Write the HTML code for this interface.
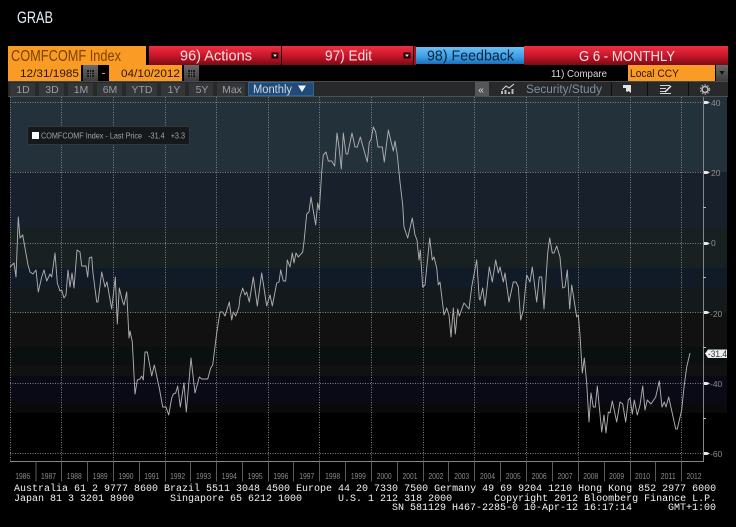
<!DOCTYPE html>
<html><head><meta charset="utf-8"><style>
html,body{margin:0;padding:0;background:#000;width:736px;height:527px;overflow:hidden}
svg{display:block}
text{font-family:"Liberation Sans",sans-serif}
.m{font-family:"Liberation Mono",monospace;font-size:10px;fill:#f2f2f2;white-space:pre}
.y{font-size:8.5px;fill:#8a8a8a;text-anchor:middle}
.a{font-size:8.5px;fill:#8d8d8d}
.b{font-size:10.5px;fill:#999da0;text-anchor:middle}
.g{stroke:#7d8284;stroke-width:1;stroke-dasharray:1 1.5;fill:none}
</style></head><body>
<svg width="736" height="527" viewBox="0 0 736 527" xmlns="http://www.w3.org/2000/svg">
<defs>
<linearGradient id="r" x1="0" y1="0" x2="0" y2="1"><stop offset="0" stop-color="#ee3040"/><stop offset=".5" stop-color="#c8172a"/><stop offset="1" stop-color="#7c0a14"/></linearGradient>
<linearGradient id="bl" x1="0" y1="0" x2="0" y2="1"><stop offset="0" stop-color="#6cc0f5"/><stop offset=".6" stop-color="#3c9ce4"/><stop offset="1" stop-color="#1d6fb4"/></linearGradient>
<linearGradient id="gr" x1="0" y1="0" x2="0" y2="1"><stop offset="0" stop-color="#6a6a6a"/><stop offset="1" stop-color="#3c3c3c"/></linearGradient>
</defs>
<rect width="736" height="527" fill="#000"/>
<text x="17" y="23" font-size="16.500" fill="#e4edf6" textLength="36" lengthAdjust="spacingAndGlyphs">GRAB</text>

<!-- header -->
<rect x="8" y="46" width="138" height="19" fill="#f99b24"/>
<text x="11" y="61" font-size="15.500" fill="#7a4500" textLength="110" lengthAdjust="spacingAndGlyphs">COMFCOMF Index</text>
<rect x="149" y="46" width="132" height="19" fill="url(#r)"/>
<text x="180" y="60.500" font-size="15" fill="#f5e0e2" textLength="72" lengthAdjust="spacingAndGlyphs">96) Actions</text>
<rect x="271.500" y="52.500" width="7" height="6" fill="#1a0205"/><path d="M273 54.500h4l-2 2.500z" fill="#e8e8e8"/>
<rect x="282" y="46" width="131" height="19" fill="url(#r)"/>
<text x="325" y="60.500" font-size="15" fill="#f5e0e2" textLength="47" lengthAdjust="spacingAndGlyphs">97) Edit</text>
<rect x="403.500" y="52.500" width="7" height="6" fill="#1a0205"/><path d="M405 54.500h4l-2 2.500z" fill="#e8e8e8"/>
<rect x="414" y="46" width="2" height="19" fill="#a01522"/>
<rect x="416" y="47" width="108" height="17" fill="url(#bl)"/>
<text x="427" y="60.500" font-size="15" fill="#0b2440" textLength="87" lengthAdjust="spacingAndGlyphs">98)  Feedback</text>
<rect x="524" y="46" width="204" height="19" fill="url(#r)"/>
<text x="579" y="61" font-size="15" fill="#f5e0e2" textLength="96" lengthAdjust="spacingAndGlyphs">G 6 - MONTHLY</text>

<!-- date row -->
<rect x="8" y="65" width="73" height="16" fill="#f99b24"/>
<text x="20" y="77" font-size="11" fill="#2a1800" textLength="59" lengthAdjust="spacingAndGlyphs">12/31/1985</text>
<rect x="83" y="65" width="15" height="16" fill="url(#gr)"/>
<rect x="87" y="70" width="7" height="7" fill="#1a1a1a"/><path d="M87 72.500h7M87 74.500h7M89.500 70v7M91.500 70v7" stroke="#777" stroke-width=".6"/>
<rect x="102" y="73" width="3" height="1" fill="#f99b24"/>
<rect x="109" y="65" width="73" height="16" fill="#f99b24"/>
<text x="121" y="77" font-size="11" fill="#2a1800" textLength="59" lengthAdjust="spacingAndGlyphs">04/10/2012</text>
<rect x="184" y="65" width="15" height="16" fill="url(#gr)"/>
<rect x="188" y="70" width="7" height="7" fill="#1a1a1a"/><path d="M188 72.500h7M188 74.500h7M190.500 70v7M192.500 70v7" stroke="#777" stroke-width=".6"/>
<text x="551" y="77" font-size="10.500" fill="#d8d8d8" textLength="56" lengthAdjust="spacingAndGlyphs">11) Compare</text>
<rect x="628" y="65" width="87" height="16" fill="#f99b24"/>
<text x="630" y="77" font-size="11" fill="#2a1800" textLength="49" lengthAdjust="spacingAndGlyphs">Local CCY</text>
<rect x="716" y="65" width="12" height="16" fill="url(#gr)"/><path d="M719.500 71h5l-2.500 4z" fill="#111"/>

<!-- toolbar -->
<rect x="8" y="81" width="720" height="16" fill="#27292b"/>
<rect x="8" y="81" width="720" height="1" fill="#4a4a4a"/>
<rect x="8" y="96" width="720" height="1" fill="#4f4f4f"/>
<g fill="#34373a">
<rect x="10" y="83" width="25" height="13"/><rect x="39" y="83" width="25" height="13"/><rect x="68" y="83" width="25" height="13"/><rect x="97" y="83" width="25" height="13"/><rect x="126" y="83" width="31" height="13"/><rect x="161" y="83" width="24" height="13"/><rect x="189" y="83" width="24" height="13"/><rect x="217" y="83" width="28" height="13"/>
</g>
<rect x="248.500" y="82.500" width="65" height="13" fill="#214a74" stroke="#2f6496"/>
<text class="b" x="23" y="93">1D</text><text class="b" x="52" y="93">3D</text><text class="b" x="81" y="93">1M</text><text class="b" x="110" y="93">6M</text><text class="b" x="142" y="93">YTD</text><text class="b" x="174" y="93">1Y</text><text class="b" x="202" y="93">5Y</text><text class="b" x="232" y="93">Max</text>
<text x="253" y="93" font-size="11.500" fill="#c9d8e6" textLength="39" lengthAdjust="spacingAndGlyphs">Monthly</text>
<path d="M298 85.500h8l-4 6.500z" fill="#eef3f8"/>
<rect x="475" y="82" width="14" height="14" fill="#54575a"/>
<text x="481" y="93" font-size="10" fill="#e0e0e0" text-anchor="middle">«</text>
<path d="M502 94v-3M505.500 94v-4M509 94v-2M512.500 94v-5" stroke="#bbb" stroke-width="2" fill="none"/>
<path d="M502 90l4-4 3 2 5-4" stroke="#ddd" stroke-width="1" fill="none"/>
<text x="526" y="93" font-size="11.500" fill="#7d90a3" textLength="76" lengthAdjust="spacingAndGlyphs">Security/Study</text>
<path d="M611.500 82v14M647.500 82v14M688.500 82v14" stroke="#0e0e0e"/>
<path d="M623 85h8v8l-2.500-2-1.500 1-1-1v-3h-3z" fill="#e4e4e4"/>
<path d="M660 85.500h10M660 88.500h6M660 91.500h5M660 93.500h11" stroke="#d4d4d4" stroke-width="1"/><path d="M665 92l6-6" stroke="#eee" stroke-width="1.400"/>
<circle cx="705" cy="89.500" r="3" fill="none" stroke="#bbb" stroke-width="1.600"/><circle cx="705" cy="89.500" r="4.600" fill="none" stroke="#aaa" stroke-width="1.200" stroke-dasharray="1.500 1.500"/>

<!-- bands -->
<rect x="10" y="97" width="717" height="75" fill="#22313a"/>
<rect x="10" y="172" width="717" height="56" fill="#18202b"/>
<rect x="10" y="228" width="717" height="40" fill="#182022"/>
<rect x="10" y="268" width="717" height="19" fill="#111a27"/>
<rect x="10" y="287" width="717" height="26" fill="#141a1b"/>
<rect x="10" y="313" width="717" height="34" fill="#111111"/>
<rect x="10" y="347" width="717" height="18" fill="#0a1010"/>
<rect x="10" y="365" width="717" height="11" fill="#111111"/>
<rect x="10" y="376" width="717" height="27" fill="#0a0a16"/>
<rect x="10" y="403" width="717" height="10" fill="#0a0a0a"/>

<!-- grid -->
<path class="g" d="M10 102.500H703M10 172.500H703M10 243.500H703M10 312.500H703M10 383.500H703M10 453.500H703"/>
<path class="g" d="M10.500 97V461M61.500 97V461M113.500 97V461M165.500 97V461M216.500 97V461M268.500 97V461M319.500 97V461M371.500 97V461M423.500 97V461M474.500 97V461M526.500 97V461M578.500 97V461M630.500 97V461M681.500 97V461"/>

<!-- axes -->
<path d="M703.500 97V461.500H10" stroke="#858585" fill="none"/>
<path d="M36 461.500v20M61.500 461.500v20M87.500 461.500v20M113.500 461.500v20M139.500 461.500v20M165.500 461.500v20M190.500 461.500v20M216.500 461.500v20M242.500 461.500v20M268.500 461.500v20M293.500 461.500v20M319.500 461.500v20M345.500 461.500v20M371.500 461.500v20M397.500 461.500v20M423.500 461.500v20M448.500 461.500v20M474.500 461.500v20M500.500 461.500v20M526.500 461.500v20M552.500 461.500v20M578.500 461.500v20M604.500 461.500v20M630.500 461.500v20M655.500 461.500v20M681.500 461.500v20" stroke="#5a5a5a" fill="none"/>
<path d="M704 101h3l3 1.500-3 1.500h-3zM704 171h3l3 1.500-3 1.500h-3zM704 242h3l3 1.500-3 1.500h-3zM704 311h3l3 1.500-3 1.500h-3zM704 382h3l3 1.500-3 1.500h-3zM704 452h3l3 1.500-3 1.500h-3z" fill="#e8e8e8"/>
<path d="M703 207.500h3M703 277.500h3M703 347.500h3M703 418.500h3" stroke="#bbb"/>
<text class="a" x="711" y="106">40</text><text class="a" x="711" y="176">20</text><text class="a" x="711" y="246">0</text><text class="a" x="710" y="317">-20</text><text class="a" x="710" y="387">-40</text><text class="a" x="710" y="457">-60</text>

<!-- years -->
<g>
<text class="y" x="22.700" y="479" textLength="15" lengthAdjust="spacingAndGlyphs">1986</text><text class="y" x="48.500" y="479" textLength="15" lengthAdjust="spacingAndGlyphs">1987</text><text class="y" x="74.300" y="479" textLength="15" lengthAdjust="spacingAndGlyphs">1988</text><text class="y" x="100.200" y="479" textLength="15" lengthAdjust="spacingAndGlyphs">1989</text><text class="y" x="126" y="479" textLength="15" lengthAdjust="spacingAndGlyphs">1990</text><text class="y" x="151.800" y="479" textLength="15" lengthAdjust="spacingAndGlyphs">1991</text><text class="y" x="177.600" y="479" textLength="15" lengthAdjust="spacingAndGlyphs">1992</text><text class="y" x="203.500" y="479" textLength="15" lengthAdjust="spacingAndGlyphs">1993</text><text class="y" x="229.300" y="479" textLength="15" lengthAdjust="spacingAndGlyphs">1994</text><text class="y" x="255.100" y="479" textLength="15" lengthAdjust="spacingAndGlyphs">1995</text><text class="y" x="280.900" y="479" textLength="15" lengthAdjust="spacingAndGlyphs">1996</text><text class="y" x="306.800" y="479" textLength="15" lengthAdjust="spacingAndGlyphs">1997</text><text class="y" x="332.600" y="479" textLength="15" lengthAdjust="spacingAndGlyphs">1998</text><text class="y" x="358.400" y="479" textLength="15" lengthAdjust="spacingAndGlyphs">1999</text><text class="y" x="384.200" y="479" textLength="15" lengthAdjust="spacingAndGlyphs">2000</text><text class="y" x="410" y="479" textLength="15" lengthAdjust="spacingAndGlyphs">2001</text><text class="y" x="435.900" y="479" textLength="15" lengthAdjust="spacingAndGlyphs">2002</text><text class="y" x="461.700" y="479" textLength="15" lengthAdjust="spacingAndGlyphs">2003</text><text class="y" x="487.500" y="479" textLength="15" lengthAdjust="spacingAndGlyphs">2004</text><text class="y" x="513.300" y="479" textLength="15" lengthAdjust="spacingAndGlyphs">2005</text><text class="y" x="539.200" y="479" textLength="15" lengthAdjust="spacingAndGlyphs">2006</text><text class="y" x="565" y="479" textLength="15" lengthAdjust="spacingAndGlyphs">2007</text><text class="y" x="590.800" y="479" textLength="15" lengthAdjust="spacingAndGlyphs">2008</text><text class="y" x="616.600" y="479" textLength="15" lengthAdjust="spacingAndGlyphs">2009</text><text class="y" x="642.500" y="479" textLength="15" lengthAdjust="spacingAndGlyphs">2010</text><text class="y" x="668.300" y="479" textLength="15" lengthAdjust="spacingAndGlyphs">2011</text><text class="y" x="694" y="479" textLength="15" lengthAdjust="spacingAndGlyphs">2012</text>
</g>

<!-- price line -->
<polyline fill="none" stroke="#adadad" stroke-width="0.950" stroke-linejoin="round" points="10,267 14,263 16,277 18.300,217 20,238 22.700,235 28,265 30,272 33,274 36,270 38.300,292 41.700,277 44,270 46.700,281 50,274 51.700,277 55,253 57.300,283 60,291 61.700,290 64,298 66,295 68,270 70,287 72,273 74,288 77,250 80,252 81.700,266 86,266 87.700,277 89.300,258 91.700,257 93,273 96.700,302 98,302 101.700,272 105,287 107,282 111.700,309 115.300,277 117.300,324 119.300,288 122.700,302 124,305 126.700,292 129,338 130,331 132.300,342 135,394 137.300,380 140,379 141.700,376 143.300,380 145,352 147.300,352 151.700,376 154.300,365 159.300,388 162.700,407 166,407 168.700,415 171.700,398 173.300,394 175.700,393 177.700,386 180.300,407 184,383 186.300,412 191,358 195,393 199.300,377 201.700,379 207.700,379 210.700,368 212.700,365 216.700,333 220,312 222.700,312 225,316 229.300,302 231.700,320 233.300,312 235.700,316 239,307 240,297 242.700,288 245,295 246.700,292 249.300,302 253.300,277 257.300,306 261.700,273 266.700,306 270,295 272.300,306 276.700,283 279,282 280.700,270 283.300,281 285.700,281 287.300,260 290,267 292.300,253 294,263 296,253 298.300,257 302.700,252 304,242 306.700,214 309,212 311,197 315.700,225 317.700,203 319.300,210 321.700,172 323.300,155 326,152 328.300,161 331.700,161 334.700,166 337,133 339,147 341.300,169 343.300,133 346,154 347.700,154 352,133 355,147 357.300,147 360.300,137 367.300,162 369.300,142 371,140 373.300,127 375.700,132 378,147 382.300,147 384.300,162 388.300,130 393.300,151 395,141 397.300,155 400,182 402.700,205 404,227 407.700,238 412.300,218 415,235 417,240 419,260 420.300,250 422.700,287 425,285 429.700,238 432.300,260 434,257 436.700,268 438.300,285 440,282 444,315 446.700,308 449,315 451,337 453.300,308 455.300,334 457.700,309 459.300,316 464,303 469,309 471.700,287 476.700,260 479.300,299 480,300 482.700,288 485,306 489.300,267 492.300,282 495.700,260 498.300,273 500,267 503.300,282 505,273 509,302 513.300,282 516,282 518.300,287 520.700,320 523.300,310 526.700,275 530,282 532.300,267 536.700,302 539.300,277 541.700,277 544,309 547.700,253 549.700,238 552.300,253 554,253 556.700,246 560,257 562.700,288 565,287 567.300,270 569.700,309 571.700,285 576.700,317 578.300,315 580,335 582.300,373 584.300,358 586.700,383 589,422 591,393 593.300,407 595.300,407 597.300,386 601.700,432 604,415 606,433 608.300,412 610,413 612.300,401 616.700,422 620,402 622.700,404 625.700,422 628.300,400 630,398 632.300,414 634.300,400 637.300,415 640,405 642.700,386 645,410 647.300,400 651,404 655.700,397 659.300,381 662,407 664.300,402 666,407 668.700,397 675.700,429 677.300,429 681.700,410 684,387 686.700,367 690,353"/>

<!-- last price tag -->
<path d="M705 353.500l3-4h19v8.500h-19z" fill="#eeeeee"/>
<text x="708" y="357" font-size="9" fill="#333" textLength="19" lengthAdjust="spacingAndGlyphs">-31.4</text>

<!-- legend -->
<rect x="27.500" y="126.500" width="162" height="18" rx="1.500" fill="#16191c" stroke="#33373a"/>
<rect x="32" y="132" width="7" height="7" fill="#fff"/>
<text x="41" y="138.500" font-size="8.500" fill="#a0a4a6" textLength="144" lengthAdjust="spacingAndGlyphs" xml:space="preserve">COMFCOMF Index - Last Price   -31.4   +3.3</text>

<!-- footer -->
<text class="m" x="14" y="491" xml:space="preserve">Australia 61 2 9777 8600 Brazil 5511 3048 4500 Europe 44 20 7330 7500 Germany 49 69 9204 1210 Hong Kong 852 2977 6000</text>
<text class="m" x="14" y="501" xml:space="preserve">Japan 81 3 3201 8900      Singapore 65 6212 1000      U.S. 1 212 318 2000       Copyright 2012 Bloomberg Finance L.P.</text>
<text class="m" x="392" y="510" xml:space="preserve">SN 581129 H467-2285-0 10-Apr-12 16:17:14      GMT+1:00</text>
</svg>
</body></html>
